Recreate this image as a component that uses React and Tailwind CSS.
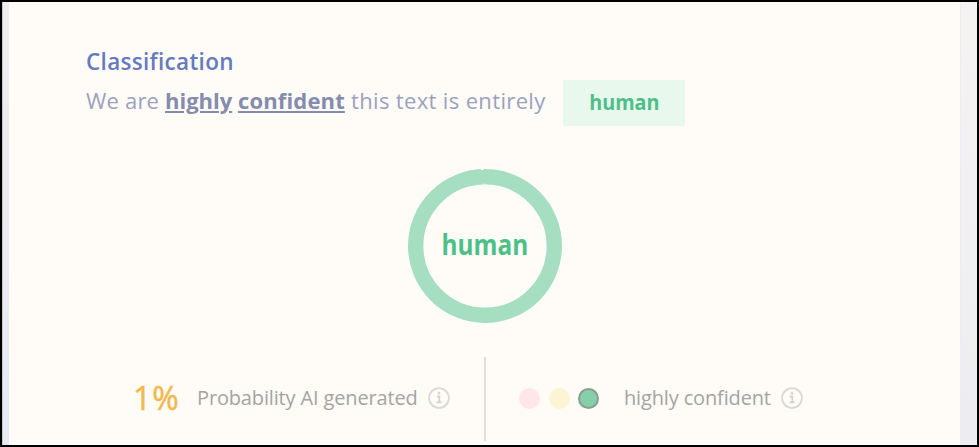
import React from 'react'

const dots = [
  { id: 'low', className: 'bg-[#fee7e6]' },
  { id: 'medium', className: 'bg-[#fcf4d2] ml-[9px]' },
  { id: 'high', className: 'bg-[#84d0a9] border-2 border-[#8b9c91] ml-2' }
]

function InfoIcon() {
  return (
    <svg className="w-[22px] h-[22px] shrink-0" viewBox="0 0 22 22" fill="none">
      <circle cx="11" cy="11" r="9.9" stroke="#d9d9d9" strokeWidth="1.8" />
      <circle cx="11" cy="6.2" r="1.3" fill="#d2d2d2" />
      <path d="M8.8 9.5h2.5v5.6M8.4 15.3h5.2" stroke="#d2d2d2" strokeWidth="1.8" />
    </svg>
  )
}

function App() {
  return (
    <div className="w-[979px] h-[447px] flex overflow-hidden bg-[#fffcf7] border-2 border-black font-['Open_Sans','Noto_Sans',sans-serif]">
      <div className="w-[7px] shrink-0 border-l border-[#c8c8c8] bg-linear-to-b from-[#eeeeee] to-[#e9e9f3]" />

      <main className="w-[951px] shrink-0 pt-[46px]">
        {/* Classification */}
        <section className="pl-[77px]">
          <h2 className="h-7 leading-7 text-[22.5px] tracking-[0.3px] font-semibold text-[#667abe] whitespace-nowrap">Classification</h2>
          <div className="flex items-center h-[46px] mt-1 text-[22px] text-[#9ba1bf] whitespace-nowrap">
            <p className="flex w-[477px] leading-7 -mt-1.5">
              <span className="w-[79px] tracking-[0.2px]">We are</span>
              <span className="w-[73px] font-bold text-[#858cae]"><u className="underline decoration-[1.5px] underline-offset-2">highly</u></span>
              <span className="w-[113px] font-bold tracking-[0.15px] text-[#858cae]"><u className="underline decoration-[1.5px] underline-offset-2">confident</u></span>
              <span className="tracking-[0.35px]">this text is entirely</span>
            </p>
            <span className="w-[122px] h-[46px] flex items-center justify-center bg-[#e8f8ed] text-[21px] font-bold text-[#4dc087]">
              <span className="scale-x-94">human</span>
            </span>
          </div>
        </section>

        {/* Result ring */}
        <div className="mt-[43px] flex justify-center">
          <div className="grid place-items-center w-[154px] h-[154px]">
            <svg className="col-start-1 row-start-1 w-[154px] h-[154px]" viewBox="0 0 154 154" fill="none">
              <circle cx="77" cy="77" r="69.3" stroke="#a6dec2" strokeWidth="15.4" />
              <path d="M72.5 0l1.5 1.5L76 0zM74.5 15.6h4l-2-1.2z" fill="#fffcf7" />
            </svg>
            <span className="col-start-1 row-start-1 -mt-1 text-[28px] leading-8 scale-x-87 font-bold text-[#4dc087]">human</span>
          </div>
        </div>

        {/* Scores */}
        <section className="mt-[34px] flex h-[82px] text-[20px] text-[#a4a4a2] whitespace-nowrap">
          <div className="w-[477px] h-[84px] pb-0.5 pl-[124px] flex items-center border-r-2 border-[#dedede]">
            <span className="w-[64px] text-[32px] tracking-[1px] text-[#f2b94e] [-webkit-text-stroke:0.5px_#f2b94e]">1%</span>
            <span className="w-[231px] tracking-[-0.15px]">Probability AI generated</span>
            <InfoIcon />
          </div>
          <div className="pl-[33px] flex items-center">
            <div className="flex w-[105px]">
              {dots.map((dot) => (
                <span key={dot.id} className={`w-[21px] h-[21px] rounded-full ${dot.className}`} />
              ))}
            </div>
            <span className="w-[157px] tracking-[-0.15px]">highly confident</span>
            <InfoIcon />
          </div>
        </section>
      </main>

      <div className="w-[17px] shrink-0 bg-linear-to-b from-[#f5f2f2] to-[#ededf1] border-l border-[#ececf2]" />
    </div>
  )
}

export default App
